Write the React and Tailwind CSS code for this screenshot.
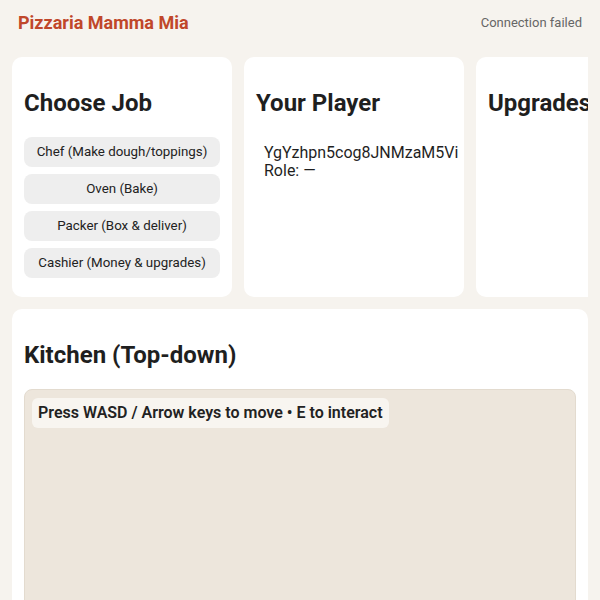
import React from 'react';

const jobs = [
  'Chef (Make dough/toppings)',
  'Oven (Bake)',
  'Packer (Box & deliver)',
  'Cashier (Money & upgrades)',
];

const Card = ({ children, className = '' }) => (
  <div className={`bg-white rounded-[10px] px-3 pt-[30px] pb-3 ${className}`}>{children}</div>
);

const App = () => {
  return (
    <div className="min-h-[600px] bg-[#f6f3ee] text-[#1f1f1f]" style={{ fontFamily: 'Roboto, "Liberation Sans", sans-serif' }}>
      {/* Header */}
      <div className="flex items-center justify-between px-[18px] h-[45px]">
        <h1 className="text-[18px] font-bold text-[#c0472a] leading-none">Pizzaria Mamma Mia</h1>
        <span className="text-[13px] text-[#666]">Connection failed</span>
      </div>

      <div className="px-3 pt-3">
        {/* Top panels */}
        <div className="flex gap-3 overflow-hidden">
          <Card className="w-[220px] h-[240px] shrink-0">
            <h2 className="text-[24px] font-bold leading-[32px] mb-[18px]">Choose Job</h2>
            <div className="flex flex-col gap-[7px]">
              {jobs.map((j) => (
                <button key={j} className="h-[30px] rounded-[8px] bg-[#eeeeee] text-[13.33px] text-[#222]">
                  {j}
                </button>
              ))}
            </div>
          </Card>
          <Card className="w-[220px] h-[240px] shrink-0">
            <h2 className="text-[24px] font-bold leading-[32px] mb-[18px]">Your Player</h2>
            <div className="px-2 pt-[7px] text-[16px] leading-[18px] whitespace-nowrap">
              <div>YgYzhpn5cog8JNMzaM5Vi</div>
              <div>Role: —</div>
            </div>
          </Card>
          <Card className="w-[220px] h-[240px] shrink-0">
            <h2 className="text-[24px] font-bold leading-[32px] whitespace-nowrap">Upgrades</h2>
          </Card>
        </div>

        {/* Kitchen */}
        <Card className="mt-3">
          <h2 className="text-[24px] font-bold leading-[32px] mb-[18px]">Kitchen (Top-down)</h2>
          <div className="h-[320px] rounded-[8px] bg-[#ede6dc] border border-[#e3dbcf] pt-2 pl-[7px]">
            <span className="inline-block h-[30px] leading-[30px] px-[6px] rounded-[6px] bg-[#f8f5f0] text-[16px] font-semibold text-[#222]">
              Press WASD / Arrow keys to move • E to interact
            </span>
          </div>
        </Card>
      </div>
    </div>
  );
};

export default App;
